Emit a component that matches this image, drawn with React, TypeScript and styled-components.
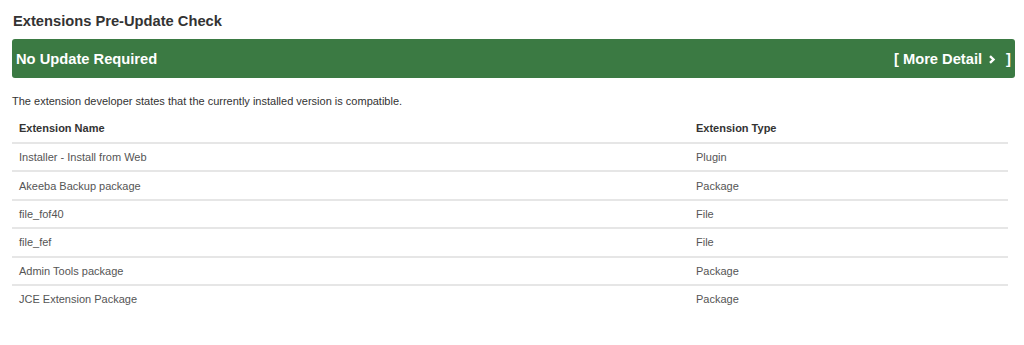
import React from "react";
import styled, { createGlobalStyle } from "styled-components";

const GlobalStyle = createGlobalStyle`
  html, body { margin: 0; padding: 0; background: #ffffff; }
  body { font-family: "Liberation Sans", Arial, Helvetica, sans-serif; color: #333333; }
`;

const Page = styled.div`
  padding: 12px 9px 0 12px;
`;

const Title = styled.h2`
  margin: 0 0 0 1px;
  font-size: 14.7px;
  line-height: 18px;
  font-weight: 700;
  color: #333333;
`;

const StatusBar = styled.div`
  margin-top: 9px;
  height: 39px;
  background: #3b7a43;
  border-radius: 3px;
  display: flex;
  align-items: center;
  justify-content: space-between;
  padding: 0 4px 0 4px;
  color: #ffffff;
  font-weight: 700;
  font-size: 14.7px;
`;

const StatusText = styled.span``;

const DetailLink = styled.span`
  display: flex;
  align-items: center;
  gap: 4px;
`;

const Chevron = styled.svg`
  width: 8px;
  height: 9px;
  margin: 1px 6px 0 2px;
`;

const Description = styled.p`
  margin: 16px 0 0 0;
  font-size: 11px;
  line-height: 14px;
  color: #333333;
`;

const Table = styled.table`
  margin-top: 10px;
  width: 996px;
  border-collapse: collapse;
  font-size: 11px;
`;

const HeadCell = styled.th<{ $w?: string }>`
  text-align: left;
  font-weight: 700;
  color: #333333;
  padding: 4px 7px 7px;
  line-height: 13px;
  vertical-align: middle;
  width: ${(p) => p.$w ?? "auto"};
  border-bottom: 2px solid #e6e6e6;
`;

const Row = styled.tr`
  border-bottom: 2px solid #e6e6e6;
  &:last-child { border-bottom: none; }
`;

const Cell = styled.td`
  padding: 0 7px;
  height: 26.4px;
  color: #555555;
  vertical-align: middle;
`;

const rows: [string, string][] = [
  ["Installer - Install from Web", "Plugin"],
  ["Akeeba Backup package", "Package"],
  ["file_fof40", "File"],
  ["file_fef", "File"],
  ["Admin Tools package", "Package"],
  ["JCE Extension Package", "Package"],
];

export default function App() {
  return (
    <Page>
      <GlobalStyle />
      <Title>Extensions Pre-Update Check</Title>
      <StatusBar>
        <StatusText>No Update Required</StatusText>
        <DetailLink>
          [ More Detail
          <Chevron viewBox="0 0 8 9">
            <path d="M2 1.2 L5.5 4.5 L2 7.8" fill="none" stroke="#fff" strokeWidth="2.4" />
          </Chevron>
          ]
        </DetailLink>
      </StatusBar>
      <Description>
        The extension developer states that the currently installed version is compatible.
      </Description>
      <Table>
        <thead>
          <tr>
            <HeadCell $w="663px">Extension Name</HeadCell>
            <HeadCell>Extension Type</HeadCell>
          </tr>
        </thead>
        <tbody>
          {rows.map(([name, type]) => (
            <Row key={name}>
              <Cell>{name}</Cell>
              <Cell>{type}</Cell>
            </Row>
          ))}
        </tbody>
      </Table>
    </Page>
  );
}
